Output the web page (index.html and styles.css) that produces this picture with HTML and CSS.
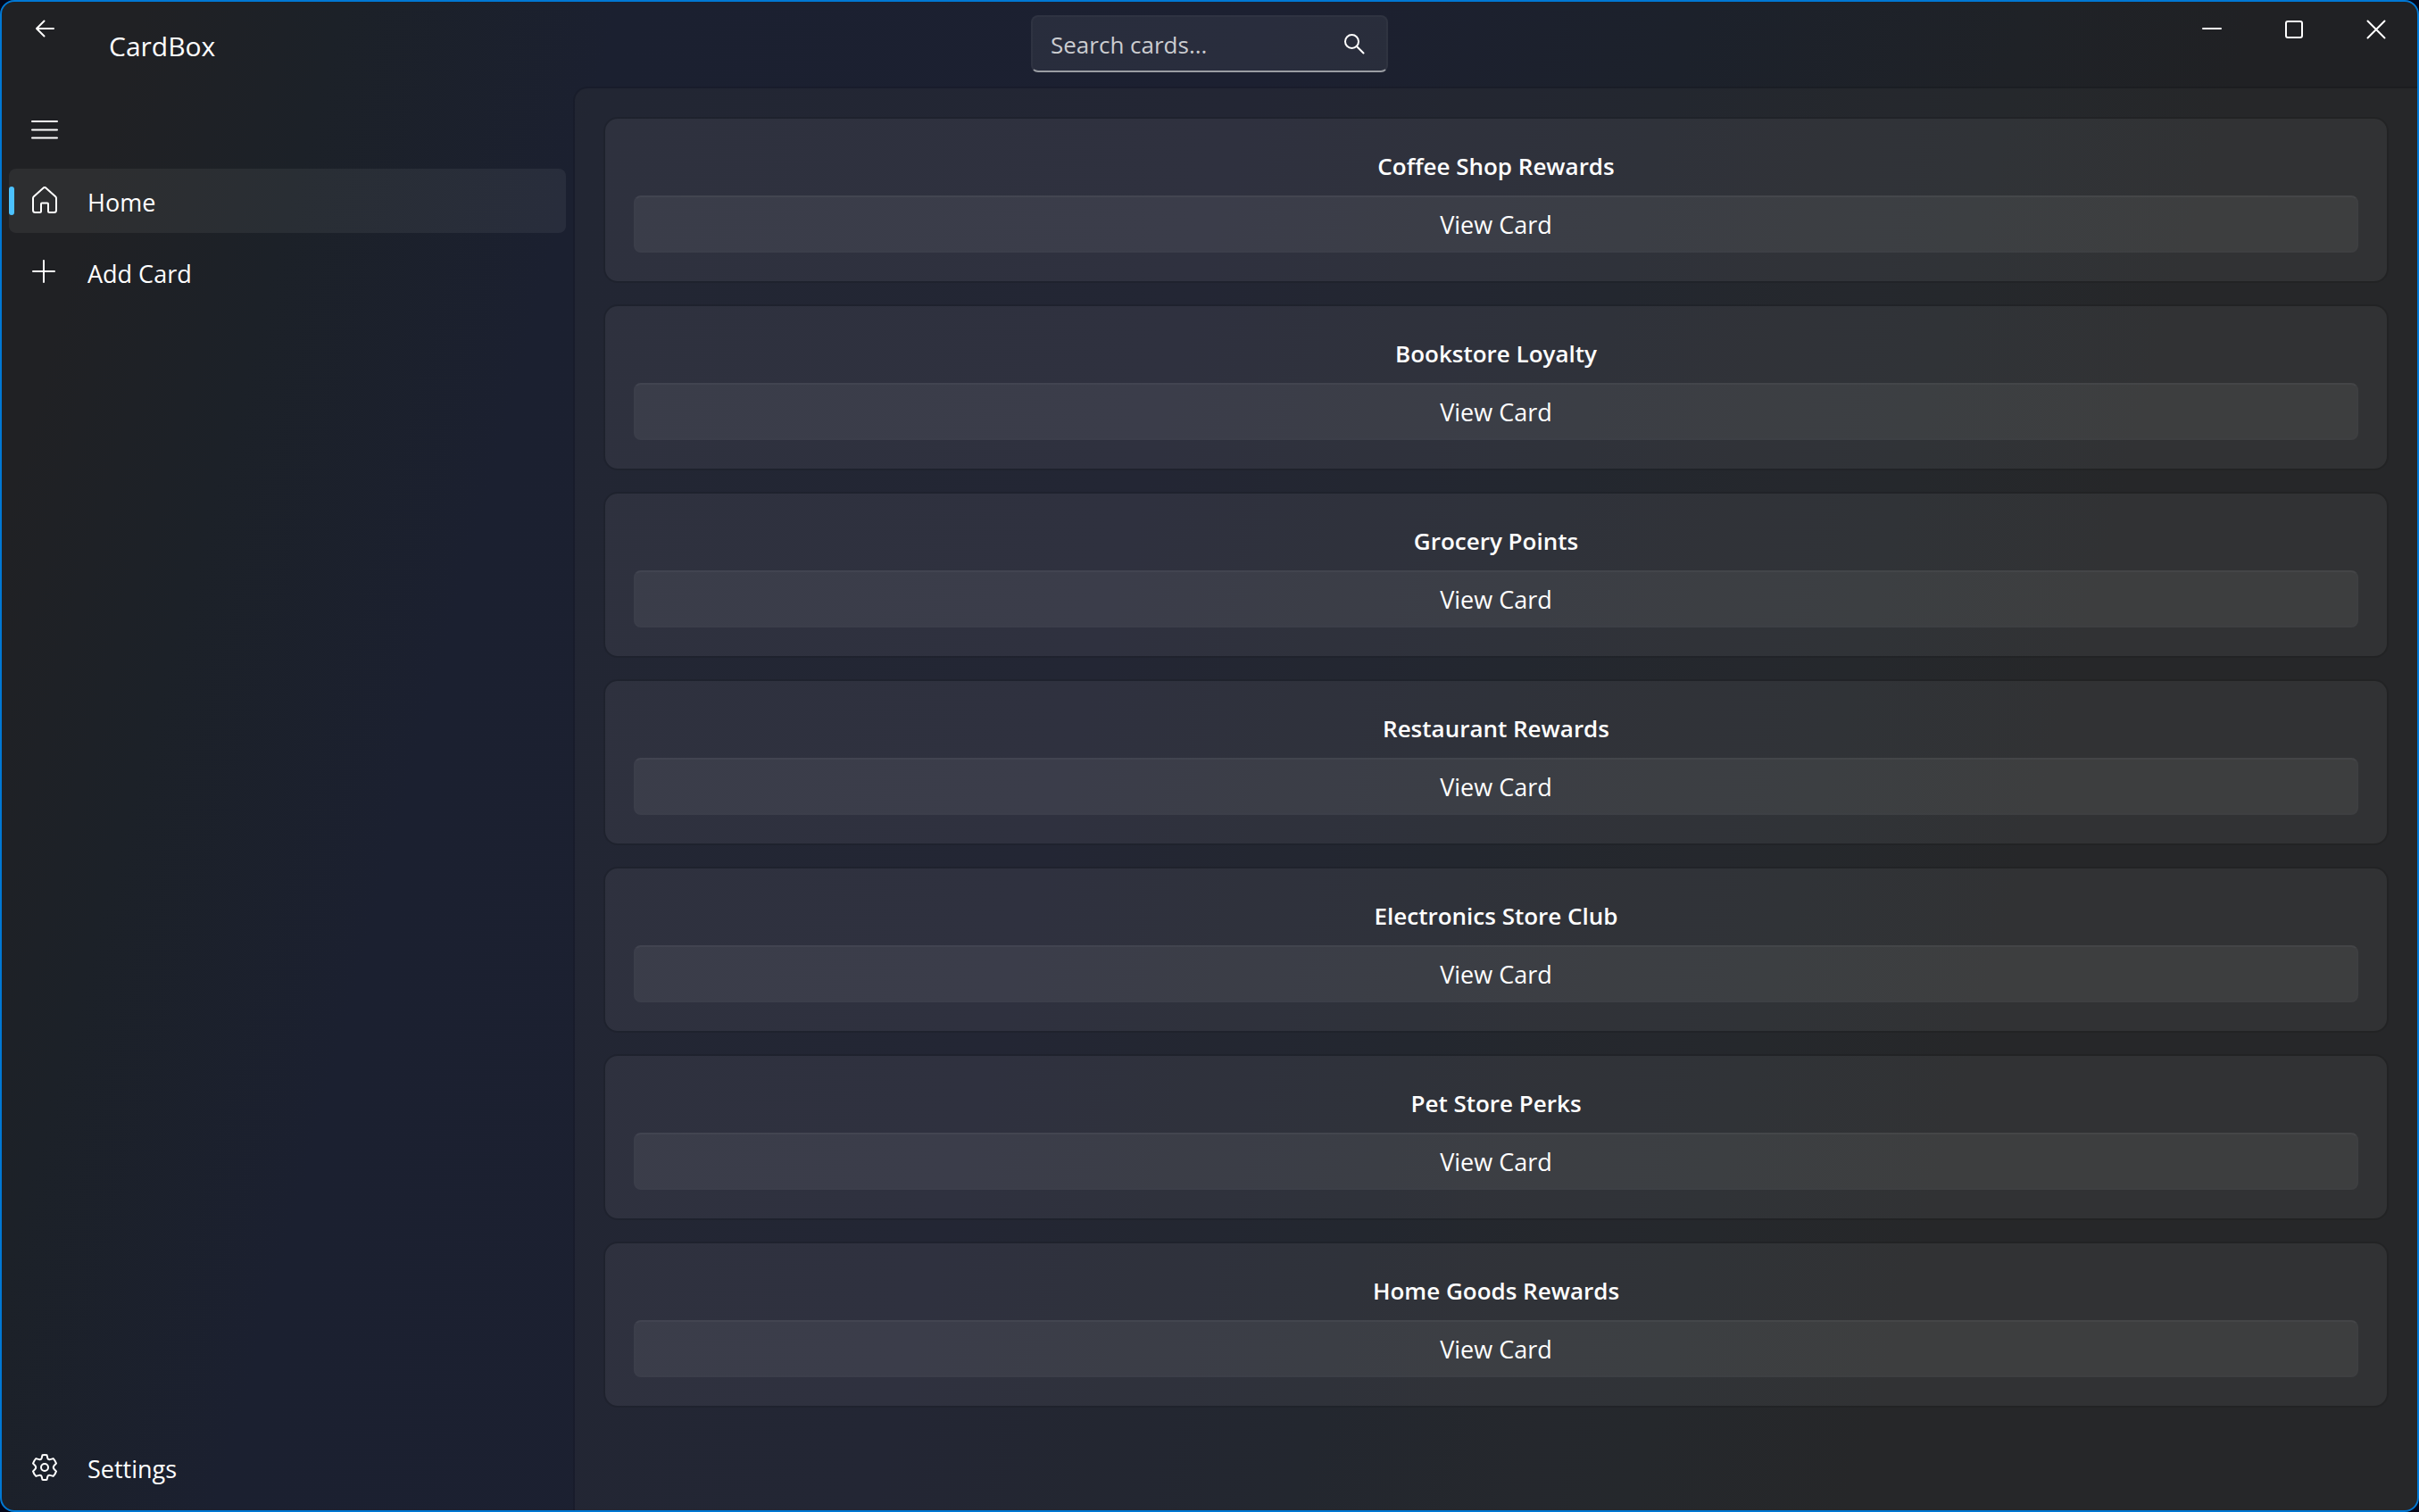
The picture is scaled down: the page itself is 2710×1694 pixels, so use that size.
FILE: index.html
```html
<!DOCTYPE html>
<html lang="en">
<head>
<meta charset="utf-8">
<meta name="viewport" content="width=device-width, initial-scale=1">
<title>CardBox</title>
<link rel="stylesheet" href="styles.css">
</head>
<body>
<div class="window">
  <header class="titlebar">
    <div class="titlebar-start">
      <button class="back" type="button" aria-label="Back">
        <svg width="22" height="22" viewBox="0 0 22 22"><path d="M21 11H2M10.500 2.500L2 11l8.500 8.500"/></svg>
      </button>
      <h1 class="app-name">CardBox</h1>
    </div>
    <form class="search" role="search">
      <input class="search-input" type="text" placeholder="Search cards..." aria-label="Search cards">
      <button class="search-button" type="button" aria-label="Search">
        <svg width="24" height="24" viewBox="0 0 24 24"><circle cx="9.500" cy="9.500" r="7.500"/><path d="M15 15l7.500 7.500"/></svg>
      </button>
    </form>
    <div class="captions">
      <button class="caption" type="button" aria-label="Minimize">
        <svg width="22" height="22" viewBox="0 0 22 22"><path d="M1 10h20"/></svg>
      </button>
      <button class="caption" type="button" aria-label="Maximize">
        <svg width="22" height="22" viewBox="0 0 22 22"><rect x="2" y="2" width="18" height="18" rx="2"/></svg>
      </button>
      <button class="caption" type="button" aria-label="Close">
        <svg width="22" height="22" viewBox="0 0 22 22"><path d="M1.500 1.500l19 19M20.500 1.500l-19 19"/></svg>
      </button>
    </div>
  </header>

  <div class="body">
    <nav class="sidebar" aria-label="Main">
      <button class="menu" type="button" aria-label="Toggle navigation">
        <svg width="32" height="32" viewBox="0 0 32 32"><path d="M2 7h28M2 16.500h28M2 25.500h28"/></svg>
      </button>
      <a class="nav-item current" href="#home" aria-current="page">
        <svg width="32" height="32" viewBox="0 0 32 32"><path d="M14.400 1.700a2.400 2.400 0 0 1 3.200 0L28.200 11.200a2.600 2.600 0 0 1 .8 1.900V26.500a2.500 2.500 0 0 1-2.500 2.500H21.500a1.500 1.500 0 0 1-1.500-1.500V19.500a1 1 0 0 0-1-1h-6a1 1 0 0 0-1 1v8a1.500 1.500 0 0 1-1.500 1.500H5.500A2.500 2.500 0 0 1 3 26.500V13.100a2.600 2.600 0 0 1 .8-1.900z"/></svg>
        <span class="nav-label">Home</span>
      </a>
      <a class="nav-item" href="#add">
        <svg width="32" height="32" viewBox="0 0 32 32"><path d="M15 3v24M3 15h24"/></svg>
        <span class="nav-label">Add Card</span>
      </a>
      <a class="nav-item settings" href="#settings">
        <svg width="32" height="32" viewBox="0 0 32 32"><circle cx="16" cy="16" r="4"/><path d="M13.500 2.300Q16 1.700 18.500 2.300L19.300 5.600Q20 7.700 22.200 7.100L25.700 6.100Q28 8.500 29 11.600L26.600 14Q25 16 26.600 18L29 20.400Q28 23.500 25.700 25.900L22.200 24.900Q20 24.300 19.300 26.400L18.500 29.700Q16 30.300 13.500 29.700L12.700 26.400Q12 24.300 9.800 24.900L6.300 25.900Q4 23.500 3 20.400L5.400 18Q7 16 5.400 14L3 11.600Q4 8.500 6.300 6.100L9.800 7.100Q12 7.700 12.700 5.600Z"/></svg>
        <span class="nav-label">Settings</span>
      </a>
    </nav>

    <main class="content">
      <article class="card"><h2 class="card-title">Coffee Shop Rewards</h2><button class="view" type="button">View Card</button></article>
      <article class="card"><h2 class="card-title">Bookstore Loyalty</h2><button class="view" type="button">View Card</button></article>
      <article class="card"><h2 class="card-title">Grocery Points</h2><button class="view" type="button">View Card</button></article>
      <article class="card"><h2 class="card-title">Restaurant Rewards</h2><button class="view" type="button">View Card</button></article>
      <article class="card"><h2 class="card-title">Electronics Store Club</h2><button class="view" type="button">View Card</button></article>
      <article class="card"><h2 class="card-title">Pet Store Perks</h2><button class="view" type="button">View Card</button></article>
      <article class="card"><h2 class="card-title">Home Goods Rewards</h2><button class="view" type="button">View Card</button></article>
    </main>
  </div>
</div>
</body>
</html>
```
FILE: styles.css
```css
* {
  box-sizing: border-box;
}

body {
  margin: 0;
  background: #02061a;
  color: #fff;
  font: 27px/38px "Open Sans", "Noto Sans", sans-serif;
}

button,
input {
  margin: 0;
  padding: 0;
  border: 0;
  background: none;
  color: inherit;
  font: inherit;
}

svg {
  display: block;
  flex: none;
  fill: none;
  stroke: #fff;
  stroke-width: 2;
  stroke-linecap: round;
  stroke-linejoin: round;
}

.window {
  display: flex;
  flex-direction: column;
  min-height: 100vh;
  border: 2px solid #0078d4;
  border-radius: 16px;
  overflow: hidden;
  background: linear-gradient(105deg, #202124 0%, #202124 5%, #1c2128 12%, #1b2030 22%, #1c2031 45%, #1c212b 60%, #1f2227 72%, #202124 80%);
}

/* Title bar */
.titlebar {
  display: grid;
  grid-template-columns: 1fr 400px 1fr;
  height: 95px;
}

.titlebar-start {
  display: flex;
  align-items: flex-start;
}

.back {
  display: grid;
  place-items: center;
  width: 96px;
  height: 60px;
}

.app-name {
  margin: 0;
  padding: 30px 0 0 24px;
  font-size: 30px;
  font-weight: 400;
  line-height: 40px;
}

.search {
  display: flex;
  height: 64px;
  margin-top: 15px;
  border: 2px solid rgba(255, 255, 255, 0.03);
  border-bottom-color: #9a9da3;
  border-radius: 8px;
  background: rgba(255, 255, 255, 0.06);
}

.search-input {
  flex: 1;
  min-width: 0;
  padding: 2px 0 0 20px;
  font-size: 26px;
  outline: none;
}

.search-input::placeholder {
  color: #cbccd0;
  opacity: 1;
}

.search-button {
  display: grid;
  place-items: center;
  width: 72px;
}

.captions {
  display: flex;
  justify-content: flex-end;
}

.caption {
  display: grid;
  place-items: center;
  width: 92px;
  height: 62px;
}

/* Navigation */
.body {
  display: flex;
  flex: 1;
}

.sidebar {
  display: flex;
  flex-direction: column;
  gap: 8px;
  width: 640px;
  padding: 12px 8px;
}

.menu {
  display: flex;
  align-items: center;
  width: 80px;
  height: 72px;
  padding-left: 24px;
}

.nav-item {
  position: relative;
  display: flex;
  align-items: center;
  gap: 32px;
  height: 72px;
  padding-left: 24px;
  border-radius: 8px;
  color: inherit;
  text-decoration: none;
}

.nav-label {
  padding-top: 4px;
}

.current {
  background: rgba(255, 255, 255, 0.06);
}

.current::before {
  content: "";
  position: absolute;
  left: 0;
  top: 20px;
  width: 6px;
  height: 32px;
  border-radius: 3px;
  background: #4cc2ff;
}

.settings {
  margin-top: auto;
}

/* Card list */
.content {
  display: flex;
  flex: 1;
  flex-direction: column;
  gap: 24px;
  padding: 32px;
  border: solid rgba(0, 0, 0, 0.1);
  border-width: 2px 0 0 2px;
  border-top-left-radius: 16px;
  background: rgba(64, 63, 66, 0.2) padding-box;
}

.card {
  display: flex;
  flex-direction: column;
  gap: 14px;
  padding: 34px 32px 32px;
  border: 2px solid rgba(0, 0, 0, 0.1);
  border-radius: 16px;
  background: rgba(255, 255, 255, 0.055) padding-box;
}

.card-title {
  margin: 0;
  font-size: 26px;
  font-weight: 600;
  line-height: 38px;
  text-align: center;
}

.view {
  height: 64px;
  padding-top: 2px;
  border: 2px solid rgba(255, 255, 255, 0.01);
  border-top-color: rgba(255, 255, 255, 0.04);
  border-radius: 8px;
  background: rgba(255, 255, 255, 0.06);
}
```
